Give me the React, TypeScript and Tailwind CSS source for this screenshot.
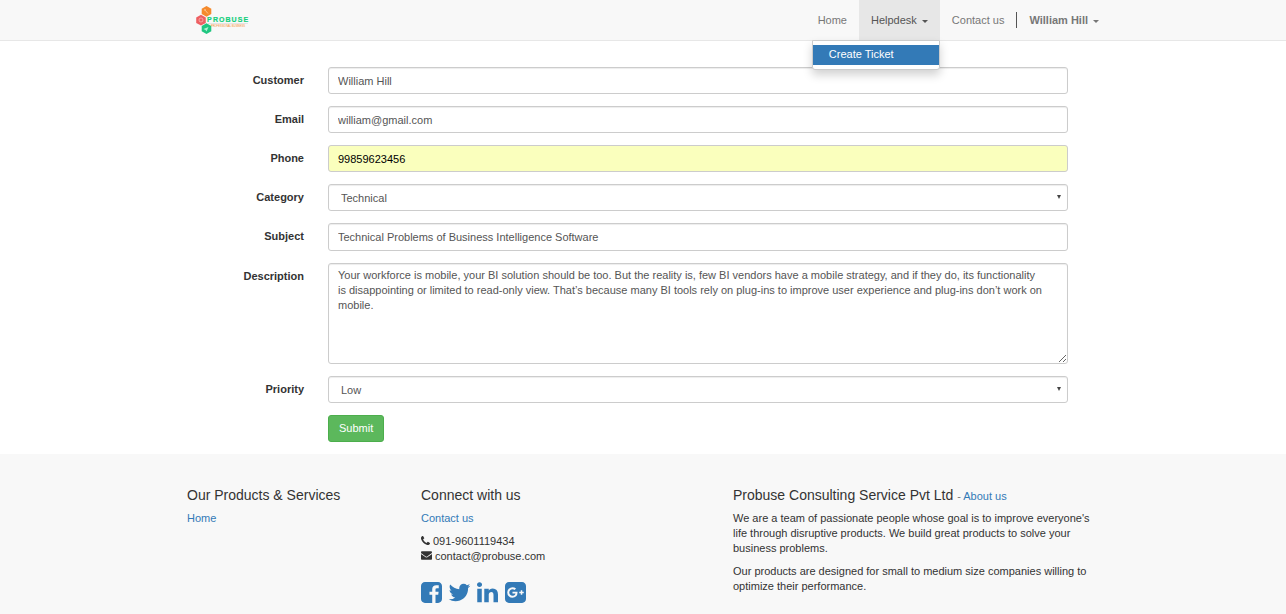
import type { ReactNode } from "react";

const FIELD =
  "block w-full rounded-[3px] border border-[#ccc] bg-white pl-[9px] text-[11px] leading-[15px] text-[#555] shadow-[inset_0_1px_1px_rgba(0,0,0,0.075)] outline-none focus:border-[#66afe9]";

function Logo() {
  return (
    <svg width="56" height="30" viewBox="0 0 56 30" role="img" aria-label="Probuse">
      <path d="M11.500 1l4.800 2.700v5.400l-4.800 2.700-4.800-2.700v-5.400z" fill="#f58a2c" />
      <path d="M6 9.800l4.800 2.700v5.400L6 20.600l-4.800-2.700v-5.400z" fill="#ee5f62" />
      <path d="M11.500 18.200l4.800 2.700v5.400l-4.800 2.700-4.800-2.700v-5.400z" fill="#1fc680" />
      <path d="M9.500 4.500l3.500 4M10.500 4l-1 1.500" stroke="#fbc38f" strokeWidth="1" fill="none" />
      <circle cx="6" cy="15" r="2" stroke="#f9b4b2" strokeWidth="0.8" fill="none" />
      <path d="M8.500 24l5-2-2 4.500-1-1.500z" fill="#b5efd5" />
      <text
        x="12 18 24 30.500 36.500 42.700 48.500"
        y="17"
        fontFamily="Liberation Sans, sans-serif"
        fontSize="7"
        fontWeight="700"
        fill="#14cf7c"
        stroke="#14cf7c"
        strokeWidth="0.2"
      >
        PROBUSE
      </text>
      <path d="M13 18.500h40" stroke="#d5d9d7" strokeWidth="0.6" />
      <text x="16" y="21.500" fontFamily="Liberation Sans, sans-serif" fontSize="2.600" fill="#f58a2c">
        PROFESSIONAL BUSINESS
      </text>
    </svg>
  );
}

function Caret() {
  return (
    <span className="ml-[5px] inline-block border-x-[3px] border-t-[3px] border-x-transparent border-t-current align-middle" />
  );
}

function Row({ id, label, children }: { id: string; label: string; children: ReactNode }) {
  return (
    <div className="flex gap-6">
      <label htmlFor={id} className="w-[117px] shrink-0 pt-[6px] text-right font-bold">
        {label}
      </label>
      <div className="min-w-0 flex-1">{children}</div>
    </div>
  );
}

function SelectField({ id, options }: { id: string; options: string[] }) {
  return (
    <div className="relative">
      <select
        id={id}
        className="block h-[27px] w-full appearance-none rounded-[3px] border border-[#ccc] bg-white pt-px pl-3 text-[11px] leading-[15px] text-[#555] shadow-[inset_0_1px_1px_rgba(0,0,0,0.075)] outline-none focus:border-[#66afe9]"
      >
        {options.map((o) => (
          <option key={o}>{o}</option>
        ))}
      </select>
      <svg
        className="pointer-events-none absolute top-[11px] right-[7px]"
        width="4"
        height="4"
        viewBox="0 0 4 4"
        aria-hidden="true"
      >
        <path d="M0 0h4L2 4z" fill="#444" />
      </svg>
    </div>
  );
}

const SOCIAL = [
  {
    name: "Facebook",
    d: "M1376 128q119 0 203.5 84.5t84.5 203.5v960q0 119-84.5 203.5t-203.5 84.5h-188v-595h199l30-232h-229v-148q0-56 23.5-84t91.5-28l122-1v-207q-63-9-178-9-136 0-217.5 80t-81.5 226v171h-200v232h200v595h-532q-119 0-203.5-84.5t-84.5-203.5v-960q0-119 84.5-203.5t203.5-84.5h960z",
  },
  {
    name: "Twitter",
    d: "M1684 408q-67 98-162 167 1 14 1 42 0 130-38 259.5t-115.5 248.5-184.5 210.5-258 146-323 54.5q-271 0-496-145 35 4 78 4 225 0 401-138-105-2-188-64.5t-114-159.5q33 5 61 5 43 0 85-11-112-23-185.5-111.5t-73.5-205.5v-4q68 38 146 41-66-44-105-115t-39-154q0-88 44-163 121 149 294.5 238.5t371.5 99.5q-8-38-8-74 0-134 94.5-228.5t228.5-94.5q140 0 236 102 109-21 205-78-37 115-142 178 93-10 186-50z",
  },
  {
    name: "LinkedIn",
    d: "M477 625v991h-330v-991h330zm21-306q1 73-50.5 122t-135.5 49h-2q-82 0-132-49t-50-122q0-74 51.5-122.5t134.5-48.5 133 48.5 51 122.5zm1166 729v568h-329v-530q0-105-40.5-164.5t-126.5-59.5q-63 0-105.5 34.5t-63.5 85.5q-11 30-11 81v553h-329q2-399 2-647t-1-296l-1-48h329v144h-2q20-32 41-56t56.5-52 87-43.5 114.5-15.5q171 0 275 113.5t104 332.5z",
  },
  {
    name: "Google Plus",
    d: "M1045 905q0-26-6-64h-362v132h217q-3 24-16.5 50t-37.5 53-66.5 44.5-96.5 17.5q-99 0-169-71t-70-171 70-171 169-71q92 0 153 59l104-101q-108-100-257-100-160 0-272 112.5t-112 271.5 112 271.5 272 112.5q165 0 266.5-105t101.5-270zm345 46h109v-110h-109v-110h-110v110h-110v110h110v110h110v-110zm274-535v960q0 119-84.5 203.5t-203.5 84.5h-960q-119 0-203.5-84.5t-84.5-203.5v-960q0-119 84.5-203.5t203.5-84.5h960q119 0 203.5 84.5t84.5 203.5z",
  },
];

function PhoneIcon() {
  return (
    <svg className="mr-[3px] inline-block align-baseline" width="9" height="9" viewBox="0 0 1408 1408" fill="currentColor" aria-hidden="true">
      <path d="M1408 1112q0 27-10 70.5t-21 68.500q-21 50-122 106-94 51-186 51-27 0-53-3.500t-57.500-12.500-47-14.500-55.500-20.500-49-18q-98-35-175-83-127-79-264-216t-216-264q-48-77-83-175-3-9-18-49t-20.500-55.500-14.500-47-12.500-57.500-3.500-53q0-92 51-186 56-101 106-122 25-11 68.500-21t70.500-10q14 0 21 3 18 6 53 76 11 19 30 54t35 63.500 31 53.500q3 4 17.500 25t21.500 35.500 7 28.500q0 20-28.500 50t-62 55-62 53-28.500 46q0 9 5 22.500t8.500 20.500 14 24 11.500 19q76 137 174 235t235 174q2 1 19 11.500t24 14 20.500 8.500 22.500 5q18 0 46-28.500t53-62 55-62 50-28.500q14 0 28.500 7t35.500 21.500 25 17.500q25 15 53.500 31t63.500 35 54 30q70 35 76 53 3 7 3 21z" />
    </svg>
  );
}

function EnvelopeIcon() {
  return (
    <svg className="mr-[3px] inline-block align-baseline" width="11" height="9" viewBox="0 256 1792 1408" fill="currentColor" aria-hidden="true">
      <path d="M1792 710v794q0 66-47 113t-113 47h-1472q-66 0-113-47t-47-113v-794q44 49 101 87 362 246 497 345 57 42 92.500 65.500t94.500 48 110 24.500h2q51 0 110-24.500t94.500-48 92.500-65.500q170-123 498-345 57-39 100-87zm0-294q0 79-49 151t-122 123q-376 261-468 325-10 7-42.500 31t-54 38.500-52 32.500-57.500 27-50 9h-2q-23 0-50-9t-57.500-27-52-32.500-54-38.500-42.500-31q-91-64-262-182.500t-205-142.500q-62-42-117-115.500t-55-136.500q0-78 41.500-130t118.500-52h1472q65 0 112.500 47t47.500 113z" />
    </svg>
  );
}

export default function App() {
  return (
    <div className="flex min-h-screen flex-col bg-white font-['Liberation_Sans',Arial,sans-serif] text-[11px] leading-[15px] text-[#333]">
      <header className="border-b border-[#e7e7e7] bg-[#f8f8f8]">
        <div className="mx-auto flex max-w-[936px] items-start justify-between">
          <a href="#" className="ml-5 pt-[5px]">
            <Logo />
          </a>
          <nav className="flex items-center text-[#777]">
            <a href="#" className="px-3 py-[12px] leading-4">
              Home
            </a>
            <div className="relative">
              <button type="button" className="block bg-[#e7e7e7] px-3 py-[12px] leading-4 text-[#555]">
                Helpdesk
                <Caret />
              </button>
              <div className="absolute top-full right-0 z-10 w-32 rounded-b-[3px] border border-[#ccc] bg-white py-1 shadow-[0_5px_10px_rgba(0,0,0,0.18)]">
                <a href="#" className="block bg-[#337ab7] px-4 pt-[2px] pb-[3px] text-white">
                  Create Ticket
                </a>
              </div>
            </div>
            <a href="#" className="px-3 py-[12px] leading-4">
              Contact us
            </a>
            <button type="button" className="border-l border-[#555] px-3 leading-4 font-bold">
              William Hill
              <Caret />
            </button>
          </nav>
        </div>
      </header>

      <main className="mx-auto w-full max-w-[936px] pt-[26px] pr-[43px] pb-3 pl-3">
        <form className="flex flex-col gap-3" onSubmit={(e) => e.preventDefault()}>
          <Row id="customer" label="Customer">
            <input id="customer" type="text" defaultValue="William Hill" className={`${FIELD} h-[27px] pr-[9px]`} />
          </Row>
          <Row id="email" label="Email">
            <input id="email" type="email" defaultValue="william@gmail.com" className={`${FIELD} h-[27px] pr-[9px]`} />
          </Row>
          <Row id="phone" label="Phone">
            <input
              id="phone"
              type="tel"
              defaultValue="99859623456"
              className="block h-[27px] w-full rounded-[3px] border border-[#ccc] bg-[#faffbd] px-[9px] text-[11px] leading-[15px] text-black outline-none"
            />
          </Row>
          <Row id="category" label="Category">
            <SelectField id="category" options={["Technical", "Functional", "Support"]} />
          </Row>
          <Row id="subject" label="Subject">
            <input
              id="subject"
              type="text"
              defaultValue="Technical Problems of Business Intelligence Software"
              className={`${FIELD} h-[28px] pr-[9px]`}
            />
          </Row>
          <Row id="description" label="Description">
            <textarea
              id="description"
              defaultValue="Your workforce is mobile, your BI solution should be too. But the reality is, few BI vendors have a mobile strategy, and if they do, its functionality is disappointing or limited to read-only view. That’s because many BI tools rely on plug-ins to improve user experience and plug-ins don’t work on mobile."
              className={`${FIELD} h-[101px] resize py-1 pr-6`}
            />
          </Row>
          <Row id="priority" label="Priority">
            <SelectField id="priority" options={["Low", "Medium", "High"]} />
          </Row>
          <div className="flex pl-[141px]">
            <button
              type="submit"
              className="h-[27px] rounded-[3px] border border-[#4cae4c] bg-[#5cb85c] px-[10px] text-white"
            >
              Submit
            </button>
          </div>
        </form>
      </main>

      <footer className="flex-1 bg-[#f8f8f8]">
        <div className="mx-auto grid max-w-[936px] grid-cols-12 pt-[33px]">
          <section className="col-span-3 px-3">
            <h4 className="mb-2 text-[14px] leading-4">Our Products &amp; Services</h4>
            <a href="#" className="block text-[#337ab7]">
              Home
            </a>
          </section>
          <section className="col-span-4 px-3">
            <h4 className="mb-2 text-[14px] leading-4">Connect with us</h4>
            <a href="#" className="block text-[#337ab7]">
              Contact us
            </a>
            <p className="mt-2">
              <PhoneIcon />
              091-9601119434
            </p>
            <p>
              <EnvelopeIcon />
              contact@probuse.com
            </p>
            <div className="mt-[18px] flex gap-[7px] text-[#337ab7]">
              {SOCIAL.map((s) => (
                <a key={s.name} href="#" aria-label={s.name}>
                  <svg width="21" height="21" viewBox="128 128 1536 1536" overflow="visible" fill="currentColor">
                    <path d={s.d} />
                  </svg>
                </a>
              ))}
            </div>
          </section>
          <section className="col-span-5 px-3">
            <h4 className="mb-2 text-[14px] leading-4">
              Probuse Consulting Service Pvt Ltd{" "}
              <small className="text-[11px] leading-none text-[#777]">
                -{" "}
                <a href="#" className="text-[#337ab7]">
                  About us
                </a>
              </small>
            </h4>
            <p>
              We are a team of passionate people whose goal is to improve everyone's life through disruptive products. We
              build great products to solve your business problems.
            </p>
            <p className="mt-2">
              Our products are designed for small to medium size companies willing to optimize their performance.
            </p>
          </section>
        </div>
      </footer>
    </div>
  );
}
